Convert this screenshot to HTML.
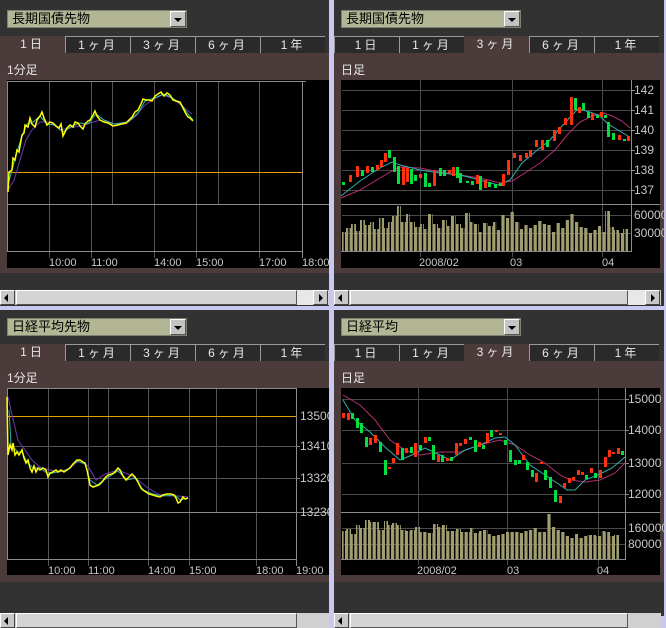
<!DOCTYPE html>
<html><head><meta charset="utf-8">
<style>
*{margin:0;padding:0;box-sizing:border-box}
body{width:666px;height:616px;overflow:hidden;background:#c8c8f0;position:relative;font-family:"Liberation Sans","Noto Sans CJK JP",sans-serif}
.p{position:absolute;background:#323232;overflow:hidden}
.dd{position:absolute;height:18px;width:180px;background:#b2b694;border:1px solid #808070;font-size:13px;line-height:16px;padding-left:4px;color:#000}
.dd b{position:absolute;right:0;top:0;width:16px;height:16px;background:#c4c4c4;border:1px solid;border-color:#fff #555 #555 #fff}
.dd b:after{content:"";position:absolute;left:3px;top:6px;border-left:4px solid transparent;border-right:4px solid transparent;border-top:4px solid #000}
.tab{position:absolute;height:17px;width:65px;background:#2a2a2a;border-top:1px solid #9a9a9a;border-left:1px solid #9a9a9a;color:#e8e8e8;font-size:12px;text-align:center;line-height:16px;letter-spacing:3px}
.tab.a{background:#4c3b3b;border:none}
.ct{position:absolute;background:#4c3b3b}
.lb{position:absolute;color:#e8e8e8;font-size:12px}
.sb{position:absolute;height:15px;background:#d0d0d0}
.sb .l,.sb .r{position:absolute;top:0;width:15px;height:15px;background:#c8c8c8;border:1px solid;border-color:#fff #444 #444 #fff}
.sb .l:after{content:"";position:absolute;left:3px;top:3px;border-top:4px solid transparent;border-bottom:4px solid transparent;border-right:4px solid #000}
.sb .r:after{content:"";position:absolute;left:5px;top:3px;border-top:4px solid transparent;border-bottom:4px solid transparent;border-left:4px solid #000}
.sb .t{position:absolute;top:0;height:15px;background:#d4d4d4;border:1px solid;border-color:#fff #555 #555 #fff}
.sb .g{position:absolute;top:0;height:15px;background:#e8e8e8}
svg{position:absolute;left:0;top:0}
</style></head><body>

<div class="p" style="left:0;top:0;width:329px;height:306px"></div>
<div class="p" style="left:334px;top:0;width:330px;height:306px"></div>
<div class="p" style="left:0;top:310px;width:329px;height:306px"></div>
<div class="p" style="left:334px;top:310px;width:330px;height:306px"></div>

<div class="ct" style="left:0;top:53px;width:329px;height:220px"></div>
<div class="ct" style="left:334px;top:53px;width:330px;height:220px"></div>
<div class="ct" style="left:0;top:361px;width:329px;height:221px"></div>
<div class="ct" style="left:334px;top:361px;width:330px;height:221px"></div>

<div class="dd" style="left:7px;top:10px">長期国債先物<b></b></div>
<div class="dd" style="left:341px;top:10px">長期国債先物<b></b></div>
<div class="dd" style="left:7px;top:318px">日経平均先物<b></b></div>
<div class="dd" style="left:341px;top:318px">日経平均<b></b></div>

<div class="tab a" style="left:0;top:36px">1日</div>
<div class="tab" style="left:65px;top:36px">1ヶ月</div>
<div class="tab" style="left:130px;top:36px">3ヶ月</div>
<div class="tab" style="left:195px;top:36px">6ヶ月</div>
<div class="tab" style="left:260px;top:36px">1年</div>
<div class="tab" style="left:334px;top:36px">1日</div>
<div class="tab" style="left:399px;top:36px">1ヶ月</div>
<div class="tab a" style="left:464px;top:36px">3ヶ月</div>
<div class="tab" style="left:529px;top:36px">6ヶ月</div>
<div class="tab" style="left:594px;top:36px">1年</div>
<div class="tab a" style="left:0;top:344px">1日</div>
<div class="tab" style="left:65px;top:344px">1ヶ月</div>
<div class="tab" style="left:130px;top:344px">3ヶ月</div>
<div class="tab" style="left:195px;top:344px">6ヶ月</div>
<div class="tab" style="left:260px;top:344px">1年</div>
<div class="tab" style="left:334px;top:344px">1日</div>
<div class="tab" style="left:399px;top:344px">1ヶ月</div>
<div class="tab a" style="left:464px;top:344px">3ヶ月</div>
<div class="tab" style="left:529px;top:344px">6ヶ月</div>
<div class="tab" style="left:594px;top:344px">1年</div>

<div class="lb" style="left:7px;top:61px">1分足</div>
<div class="lb" style="left:341px;top:61px">日足</div>
<div class="lb" style="left:7px;top:369px">1分足</div>
<div class="lb" style="left:341px;top:369px">日足</div>

<div class="sb" style="left:0;top:290px;width:329px"><div class="l" style="left:0"></div><div class="t" style="left:16px;width:281px"></div><div class="g" style="left:297px;width:16px"></div><div class="r" style="left:313px"></div></div>
<div class="sb" style="left:334px;top:290px;width:327px"><div class="l" style="left:0"></div><div class="t" style="left:16px;width:278px"></div><div class="g" style="left:294px;width:17px"></div><div class="r" style="left:311px"></div></div>
<div class="sb" style="left:0;top:613px;width:329px"><div class="l" style="left:0"></div><div class="t" style="left:16px;width:281px"></div></div>
<div class="sb" style="left:334px;top:613px;width:327px"><div class="l" style="left:0"></div><div class="t" style="left:16px;width:278px"></div></div>

<svg width="666" height="616" viewBox="0 0 666 616" font-family="Liberation Sans, sans-serif" font-size="11">
<defs>
<pattern id="vs" patternUnits="userSpaceOnUse" width="4.6" height="10"><rect x="0" y="0" width="3.2" height="10" fill="#a09e70"/></pattern>
</defs>

<rect x="7" y="80" width="322" height="188" fill="#000"/>
<g stroke="#555" stroke-width="1">
<line x1="49.5" y1="81" x2="49.5" y2="258"/><line x1="91.5" y1="81" x2="91.5" y2="258"/>
<line x1="112.5" y1="81" x2="112.5" y2="204"/><line x1="154.5" y1="81" x2="154.5" y2="258"/>
<line x1="196.5" y1="81" x2="196.5" y2="258"/><line x1="218.5" y1="81" x2="218.5" y2="204"/>
<line x1="259.5" y1="81" x2="259.5" y2="258"/>
</g>
<g stroke="#8a8a8a" fill="none"><rect x="7.5" y="81.5" width="295" height="170"/><line x1="302" y1="81.5" x2="306" y2="81.5"/><line x1="7" y1="204.5" x2="329" y2="204.5"/><line x1="302.5" y1="251" x2="302.5" y2="258"/></g>
<line x1="8" y1="172.5" x2="302" y2="172.5" stroke="#e0a000"/>
<polyline fill="none" stroke="#6a3ab0" stroke-width="1" points="8,190 14,180 20,160 26,140 32,130 40,122 50,122 60,130 70,128 80,126 90,123 100,120 112,124 126,124 136,116 144,106 152,100 162,95 172,98 182,106 192,114"/>
<polyline fill="none" stroke="#30c0b0" stroke-width="1" points="8,185 12,170 17,152 22,136 27,124 33,122 40,116 47,124 55,125 63,132 72,126 80,123 88,124 96,114 104,120 114,124 128,122 138,113 145,101 155,98 163,94 171,97 181,104 188,114 193,120"/>
<polyline fill="none" stroke="#ffff00" stroke-width="1.5" points="8,192 9,172 12,170 13,158 15,160 17,150 19,152 22,135 24,133 25,125 28,127 30,118 32,124 35,127 37,120 40,116 42,112 44,118 47,125 50,122 53,123 56,126 59,128 61,124 63,136 65,132 67,128 70,125 73,127 75,122 78,123 80,126 83,129 85,124 88,121 90,120 93,115 95,111 97,116 100,120 104,122 108,123 113,126 118,125 122,124 126,123 128,121 132,117 135,112 138,110 141,104 143,99 146,100 149,100 152,101 155,96 158,94 161,92 164,96 167,93 170,95 173,100 176,101 180,102 183,108 186,114 188,117 190,118 193,121"/>
<g fill="#c8c8c8"><text x="49" y="266">10:00</text><text x="91" y="266">11:00</text><text x="154" y="266">14:00</text><text x="196" y="266">15:00</text><text x="259" y="266">17:00</text><text x="302" y="266">18:00</text></g>

<rect x="341" y="80" width="319" height="188" fill="#000"/>
<g stroke="#4a4a4a">
<line x1="342" y1="90.5" x2="631" y2="90.5"/><line x1="342" y1="110.5" x2="631" y2="110.5"/><line x1="342" y1="130.5" x2="631" y2="130.5"/><line x1="342" y1="150.5" x2="631" y2="150.5"/><line x1="342" y1="170.5" x2="631" y2="170.5"/><line x1="342" y1="190.5" x2="631" y2="190.5"/>
<line x1="342" y1="215.5" x2="631" y2="215.5"/><line x1="342" y1="233.5" x2="631" y2="233.5"/>
<line x1="420.5" y1="80" x2="420.5" y2="257"/><line x1="512.5" y1="80" x2="512.5" y2="257"/><line x1="602.5" y1="80" x2="602.5" y2="257"/>
</g>
<g stroke="#8a8a8a" fill="none"><line x1="631.5" y1="80" x2="631.5" y2="252"/><line x1="341" y1="204.5" x2="660" y2="204.5"/><line x1="341" y1="251.5" x2="632" y2="251.5"/><line x1="631" y1="90.5" x2="635" y2="90.5"/><line x1="631" y1="110.5" x2="635" y2="110.5"/><line x1="631" y1="130.5" x2="635" y2="130.5"/><line x1="631" y1="150.5" x2="635" y2="150.5"/><line x1="631" y1="170.5" x2="635" y2="170.5"/><line x1="631" y1="190.5" x2="635" y2="190.5"/></g>
<path fill="url(#vs)" d="M342,251 V232 H346 V228 H351 V224 H356 V231 H360 V220 H365 V225 H370 V222 H374 V229 H379 V218 H384 V228 H388 V222 H392 V216 H397 V206 H401 V222 H406 V214 H410 V222 H415 V227 H420 V224 H424 V229 H428 V214 H433 V224 H438 V228 H442 V220 H447 V226 H451 V216 H456 V224 H461 V228 H465 V213 H470 V222 H474 V224 H479 V232 H483 V223 H488 V226 H493 V222 H497 V230 H501 V215 H506 V218 H510 V212 H515 V222 H520 V229 H524 V225 H529 V228 H533 V225 H538 V221 H542 V224 H546 V225 H551 V232 H556 V223 H560 V228 H565 V220 H570 V214 H574 V222 H579 V227 H583 V228 H588 V233 H592 V230 H597 V226 H601 V232 H605 V211 H610 V227 H614 V230 H619 V233 H623 V229 H628 V251 Z"/>
<polyline fill="none" stroke="#b03070" points="341,198 360,190 380,178 392,171 400,167 420,168 440,172 460,175 480,178 500,183 512,181 525,173 540,163 555,150 568,134 580,122 592,116 604,113 612,116 622,121 630,128"/>
<polyline fill="none" stroke="#30b0b0" points="341,196 360,181 380,168 392,162 400,165 420,170 440,173 460,175 480,180 498,185 510,180 522,163 535,152 550,140 562,126 572,115 578,109 590,112 600,116 608,124 618,130 628,136"/>
<g fill="#00e040">
<rect x="342" y="182" width="3" height="3"/><rect x="361" y="170" width="3" height="6"/><rect x="371" y="167" width="3" height="5"/><rect x="388" y="150" width="3" height="8"/><rect x="393" y="157" width="3" height="15"/><rect x="397" y="166" width="3" height="18"/><rect x="410" y="169" width="3" height="15"/><rect x="414" y="175" width="3" height="6"/><rect x="424" y="173" width="3" height="14"/><rect x="428" y="183" width="3" height="4"/><rect x="439" y="168" width="3" height="8"/><rect x="443" y="170" width="3" height="6"/><rect x="456" y="167" width="3" height="11"/><rect x="459" y="173" width="3" height="10"/><rect x="466" y="181" width="3" height="2"/><rect x="471" y="181" width="3" height="4"/><rect x="479" y="176" width="3" height="14"/><rect x="488" y="182" width="3" height="5"/><rect x="494" y="184" width="3" height="4"/><rect x="499" y="183" width="3" height="3"/><rect x="546" y="140" width="3" height="7"/><rect x="574" y="98" width="3" height="12"/><rect x="582" y="103" width="3" height="7"/><rect x="587" y="112" width="3" height="6"/><rect x="596" y="115" width="3" height="3"/><rect x="604" y="115" width="3" height="3"/><rect x="607" y="122" width="3" height="15"/><rect x="612" y="133" width="3" height="7"/><rect x="623" y="139" width="3" height="2"/>
</g>
<g fill="#ff3010">
<rect x="349" y="175" width="3" height="7"/><rect x="356" y="166" width="3" height="11"/><rect x="366" y="166" width="3" height="7"/><rect x="376" y="165" width="3" height="5"/><rect x="380" y="160" width="3" height="7"/><rect x="384" y="153" width="3" height="9"/><rect x="402" y="167" width="3" height="18"/><rect x="406" y="168" width="3" height="14"/><rect x="419" y="174" width="3" height="4"/><rect x="433" y="170" width="3" height="16"/><rect x="448" y="170" width="3" height="3"/><rect x="452" y="167" width="3" height="9"/><rect x="476" y="175" width="3" height="9"/><rect x="484" y="180" width="3" height="8"/><rect x="502" y="174" width="3" height="12"/><rect x="507" y="160" width="3" height="15"/><rect x="513" y="153" width="3" height="5"/><rect x="519" y="155" width="3" height="6"/><rect x="525" y="153" width="3" height="5"/><rect x="529" y="150" width="3" height="7"/><rect x="535" y="140" width="3" height="7"/><rect x="541" y="140" width="3" height="10"/><rect x="553" y="130" width="3" height="11"/><rect x="558" y="127" width="3" height="7"/><rect x="564" y="118" width="3" height="7"/><rect x="570" y="97" width="3" height="28"/><rect x="578" y="107" width="3" height="6"/><rect x="591" y="113" width="3" height="7"/><rect x="600" y="112" width="3" height="5"/><rect x="618" y="135" width="3" height="5"/><rect x="627" y="136" width="3" height="5"/>
</g>
<g fill="#c8c8c8" font-size="12"><text x="634" y="94">142</text><text x="634" y="114">141</text><text x="634" y="134">140</text><text x="634" y="154">139</text><text x="634" y="174">138</text><text x="634" y="194">137</text><text x="634" y="219">60000</text><text x="634" y="237">30000</text></g>
<g fill="#c8c8c8"><text x="419" y="266">2008/02</text><text x="510" y="266">03</text><text x="602" y="266">04</text></g>

<rect x="7" y="388" width="322" height="187" fill="#000"/>
<g stroke="#555">
<line x1="48.5" y1="389" x2="48.5" y2="566"/><line x1="88.5" y1="389" x2="88.5" y2="566"/><line x1="108.5" y1="389" x2="108.5" y2="512"/><line x1="148.5" y1="389" x2="148.5" y2="566"/><line x1="189.5" y1="389" x2="189.5" y2="566"/><line x1="216.5" y1="389" x2="216.5" y2="512"/><line x1="256.5" y1="389" x2="256.5" y2="566"/>
<line x1="7" y1="446.5" x2="296" y2="446.5"/><line x1="7" y1="478.5" x2="296" y2="478.5"/>
</g>
<g stroke="#8a8a8a" fill="none"><rect x="7.5" y="388.5" width="289" height="171"/><line x1="7" y1="512.5" x2="329" y2="512.5"/><line x1="296.5" y1="559" x2="296.5" y2="566"/><line x1="296" y1="446.5" x2="300" y2="446.5"/><line x1="296" y1="478.5" x2="300" y2="478.5"/></g>
<line x1="8" y1="416.5" x2="296" y2="416.5" stroke="#e0a000"/>
<polyline fill="none" stroke="#6a3ab0" points="8,397 12,415 18,440 25,450 32,460 40,467 50,470 60,472 70,468 80,460 88,466 96,480 105,474 118,470 128,474 138,480 148,488 158,494 168,496 178,496 188,497"/>
<polyline fill="none" stroke="#30b0b0" points="9,410 11,445 14,448 18,452 22,452 27,462 33,468 40,468 48,474 58,472 67,470 77,461 85,464 90,480 97,485 107,478 118,471 127,480 135,478 143,490 153,494 163,496 175,495 180,500 188,498"/>
<polyline fill="none" stroke="#ffff00" stroke-width="1.5" points="7,397 8,455 10,445 12,450 13,443 15,455 17,452 19,455 22,450 24,458 26,463 28,460 30,468 32,472 34,466 36,472 38,468 40,470 43,468 46,470 48,477 50,473 53,472 56,470 58,472 61,470 64,472 67,470 70,468 73,464 75,462 77,460 80,460 83,462 85,463 87,470 89,480 90,485 93,487 96,486 99,485 102,482 105,478 108,475 112,474 115,472 118,468 120,470 123,476 126,480 129,477 132,474 135,477 138,482 141,488 143,490 146,492 149,494 153,495 156,496 160,497 163,495 167,494 171,494 174,495 176,498 178,503 180,502 183,497 185,499 188,498"/>
<g fill="#c8c8c8"><text x="300" y="420" font-size="12">13500</text><text x="300" y="450" font-size="12">13410</text><text x="300" y="482" font-size="12">13320</text><text x="300" y="516" font-size="12">13230</text>
<text x="48" y="574">10:00</text><text x="88" y="574">11:00</text><text x="148" y="574">14:00</text><text x="189" y="574">15:00</text><text x="256" y="574">18:00</text><text x="296" y="574">19:00</text></g>

<rect x="341" y="388" width="319" height="187" fill="#000"/>
<g stroke="#4a4a4a">
<line x1="342" y1="399.5" x2="625" y2="399.5"/><line x1="342" y1="430.5" x2="625" y2="430.5"/><line x1="342" y1="463.5" x2="625" y2="463.5"/><line x1="342" y1="494.5" x2="625" y2="494.5"/>
<line x1="342" y1="528.5" x2="625" y2="528.5"/><line x1="342" y1="544.5" x2="625" y2="544.5"/>
<line x1="418.5" y1="388" x2="418.5" y2="565"/><line x1="507.5" y1="388" x2="507.5" y2="565"/><line x1="598.5" y1="388" x2="598.5" y2="565"/>
</g>
<g stroke="#8a8a8a" fill="none"><line x1="625.5" y1="388" x2="625.5" y2="559"/><line x1="341" y1="512.5" x2="660" y2="512.5"/><line x1="341" y1="559.5" x2="626" y2="559.5"/><line x1="625" y1="399.5" x2="629" y2="399.5"/><line x1="625" y1="430.5" x2="629" y2="430.5"/><line x1="625" y1="463.5" x2="629" y2="463.5"/><line x1="625" y1="494.5" x2="629" y2="494.5"/></g>
<path fill="url(#vs)" d="M342,559 V531 H346 V529 H351 V534 H356 V525 H360 V528 H365 V520 H370 V522 H374 V522 H379 V530 H384 V521 H388 V525 H392 V523 H397 V525 H401 V530 H406 V531 H410 V530 H415 V527 H420 V532 H424 V532 H428 V533 H433 V524 H438 V527 H442 V525 H447 V531 H451 V531 H456 V529 H461 V532 H465 V532 H470 V528 H474 V533 H479 V531 H483 V530 H488 V534 H492 V536 H497 V535 H501 V534 H506 V532 H510 V532 H515 V532 H520 V533 H524 V531 H529 V530 H533 V528 H538 V532 H542 V532 H547 V514 H551 V527 H556 V530 H560 V532 H565 V536 H569 V538 H574 V534 H578 V538 H583 V536 H587 V535 H592 V535 H596 V536 H601 V531 H605 V532 H610 V536 H614 V535 H619 V559 Z"/>
<polyline fill="none" stroke="#b03070" points="343,395 360,405 375,420 390,440 405,450 420,455 440,452 460,452 480,445 500,440 515,445 530,455 545,463 560,475 570,480 585,482 600,480 615,473 625,463"/>
<polyline fill="none" stroke="#30b0b0" points="343,400 355,420 370,432 385,447 400,460 412,455 425,448 440,455 450,460 465,450 480,445 495,438 505,437 515,445 530,465 545,475 560,485 567,490 575,490 585,480 600,474 612,468 625,457"/>
<g fill="#00e040">
<rect x="351" y="413" width="3" height="6"/><rect x="356" y="418" width="3" height="10"/><rect x="360" y="423" width="3" height="10"/><rect x="365" y="437" width="3" height="10"/><rect x="379" y="442" width="3" height="10"/><rect x="384" y="460" width="3" height="15"/><rect x="401" y="448" width="3" height="12"/><rect x="410" y="447" width="3" height="6"/><rect x="419" y="445" width="3" height="5"/><rect x="428" y="437" width="3" height="4"/><rect x="432" y="445" width="3" height="15"/><rect x="441" y="455" width="3" height="7"/><rect x="450" y="457" width="3" height="4"/><rect x="469" y="437" width="3" height="3"/><rect x="474" y="440" width="3" height="12"/><rect x="482" y="445" width="3" height="4"/><rect x="490" y="430" width="3" height="7"/><rect x="504" y="440" width="3" height="5"/><rect x="509" y="450" width="3" height="12"/><rect x="514" y="460" width="3" height="5"/><rect x="518" y="460" width="3" height="4"/><rect x="526" y="462" width="3" height="8"/><rect x="531" y="470" width="3" height="7"/><rect x="544" y="470" width="3" height="10"/><rect x="549" y="477" width="3" height="11"/><rect x="554" y="490" width="3" height="12"/><rect x="585" y="475" width="3" height="4"/><rect x="594" y="473" width="3" height="5"/><rect x="621" y="451" width="3" height="4"/>
</g>
<g fill="#ff3010">
<rect x="342" y="413" width="3" height="5"/><rect x="347" y="413" width="3" height="7"/><rect x="369" y="438" width="3" height="7"/><rect x="374" y="435" width="3" height="8"/><rect x="388" y="467" width="3" height="2"/><rect x="392" y="458" width="3" height="5"/><rect x="396" y="443" width="3" height="12"/><rect x="405" y="448" width="3" height="5"/><rect x="414" y="443" width="3" height="14"/><rect x="424" y="437" width="3" height="6"/><rect x="437" y="455" width="3" height="7"/><rect x="446" y="458" width="3" height="3"/><rect x="455" y="443" width="3" height="12"/><rect x="459" y="443" width="3" height="3"/><rect x="464" y="439" width="3" height="5"/><rect x="478" y="442" width="3" height="5"/><rect x="486" y="433" width="3" height="10"/><rect x="495" y="430" width="3" height="2"/><rect x="499" y="433" width="3" height="2"/><rect x="522" y="455" width="3" height="5"/><rect x="535" y="473" width="3" height="9"/><rect x="540" y="462" width="3" height="2"/><rect x="559" y="496" width="3" height="7"/><rect x="563" y="483" width="3" height="5"/><rect x="568" y="478" width="3" height="5"/><rect x="572" y="477" width="3" height="3"/><rect x="577" y="470" width="3" height="5"/><rect x="581" y="472" width="3" height="3"/><rect x="590" y="468" width="3" height="5"/><rect x="599" y="470" width="3" height="8"/><rect x="604" y="457" width="3" height="10"/><rect x="608" y="450" width="3" height="7"/><rect x="612" y="452" width="3" height="2"/><rect x="617" y="448" width="3" height="6"/>
</g>
<g fill="#c8c8c8" font-size="12"><text x="628" y="403">15000</text><text x="628" y="434">14000</text><text x="628" y="467">13000</text><text x="628" y="498">12000</text><text x="628" y="532">160000</text><text x="628" y="548">80000</text></g>
<g fill="#c8c8c8"><text x="417" y="574">2008/02</text><text x="507" y="574">03</text><text x="597" y="574">04</text></g>
</svg>
</body></html>
